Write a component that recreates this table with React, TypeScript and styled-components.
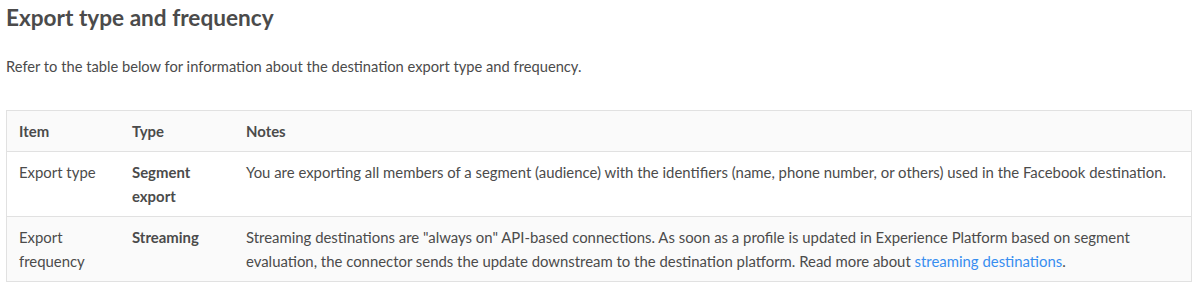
import styled, { createGlobalStyle } from 'styled-components';

const GlobalStyle = createGlobalStyle`
  body {
    margin: 0;
    background: #ffffff;
    font-family: Lato, 'Open Sans', sans-serif;
    color: #4b4b4b;
  }
`;

const Page = styled.main`
  padding: 0 5px 0 6px;
`;

const Heading = styled.h2`
  margin: 0;
  padding-top: 4px;
  font-size: 22.6px;
  line-height: 28px;
  font-weight: 700;
  color: #4b4b4b;
`;

const Intro = styled.p`
  margin: 22px 0 0;
  font-size: 14.7px;
  line-height: 24px;
  color: #4b4b4b;
`;

const Table = styled.table`
  width: 100%;
  margin-top: 32px;
  border-collapse: collapse;
  border: 1px solid #e1e1e1;
  font-size: 14.9px;
  line-height: 24px;
`;

const Row = styled.tr<{ $shaded?: boolean }>`
  background: ${(p) => (p.$shaded ? '#fafafa' : '#ffffff')};
  border-bottom: 1px solid #e1e1e1;
`;

const HeadCell = styled.th<{ $w?: number }>`
  width: ${(p) => (p.$w ? `${p.$w}px` : 'auto')};
  padding: 8px 12px;
  text-align: left;
  font-weight: 700;
  vertical-align: top;
`;

const Cell = styled.td<{ $bold?: boolean }>`
  padding: 8px 12px;
  vertical-align: top;
  font-weight: ${(p) => (p.$bold ? 700 : 400)};
`;

const Link = styled.a`
  color: #378ef0;
  text-decoration: none;
`;

export default function App() {
  return (
    <Page>
      <GlobalStyle />
      <Heading>Export type and frequency</Heading>
      <Intro>
        Refer to the table below for information about the destination export
        type and frequency.
      </Intro>
      <Table>
        <thead>
          <Row $shaded>
            <HeadCell $w={89}>Item</HeadCell>
            <HeadCell $w={90}>Type</HeadCell>
            <HeadCell>Notes</HeadCell>
          </Row>
        </thead>
        <tbody>
          <Row>
            <Cell>Export type</Cell>
            <Cell $bold>Segment export</Cell>
            <Cell>
              You are exporting all members of a segment (audience) with the
              identifiers (name, phone number, or others) used in the Facebook
              destination.
            </Cell>
          </Row>
          <Row $shaded>
            <Cell>Export frequency</Cell>
            <Cell $bold>Streaming</Cell>
            <Cell>
              Streaming destinations are "always on" API-based connections. As
              soon as a profile is updated in Experience Platform based on
              segment evaluation, the connector sends the update downstream to
              the destination platform. Read more about{' '}
              <Link href="#">streaming destinations</Link>.
            </Cell>
          </Row>
        </tbody>
      </Table>
    </Page>
  );
}
